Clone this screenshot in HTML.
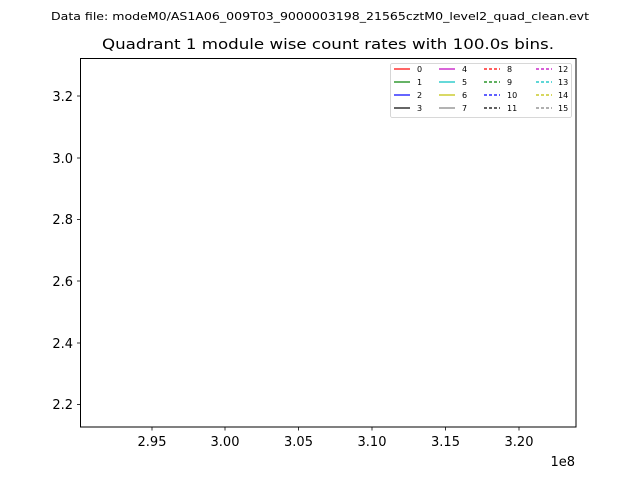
<!DOCTYPE html>
<html><head><style>body{margin:0;background:#fff}svg{display:block}</style></head><body>
<svg width="640" height="480" xmlns="http://www.w3.org/2000/svg" font-family="DejaVu Sans, Liberation Sans, sans-serif">
<rect width="640" height="480" fill="#fff"/>
<text x="320" y="20" font-size="11" text-anchor="middle" textLength="538" lengthAdjust="spacingAndGlyphs">Data file: modeM0/AS1A06_009T03_9000003198_21565cztM0_level2_quad_clean.evt</text>
<text x="328" y="49" font-size="14.4" text-anchor="middle" textLength="452" lengthAdjust="spacingAndGlyphs">Quadrant 1 module wise count rates with 100.0s bins.</text>
<rect x="80.5" y="58.5" width="495.5" height="368.5" fill="none" stroke="#000" stroke-width="1"/>
<g stroke="#000" stroke-width="0.8">
<line x1="77" y1="96" x2="80.5" y2="96"/><line x1="77" y1="158" x2="80.5" y2="158"/><line x1="77" y1="219.5" x2="80.5" y2="219.5"/><line x1="77" y1="281" x2="80.5" y2="281"/><line x1="77" y1="343" x2="80.5" y2="343"/><line x1="77" y1="404.5" x2="80.5" y2="404.5"/>
<line x1="152" y1="427" x2="152" y2="430.5"/><line x1="225" y1="427" x2="225" y2="430.5"/><line x1="298.5" y1="427" x2="298.5" y2="430.5"/><line x1="372" y1="427" x2="372" y2="430.5"/><line x1="445.5" y1="427" x2="445.5" y2="430.5"/><line x1="519" y1="427" x2="519" y2="430.5"/>
</g>
<g font-size="13" text-anchor="end">
<text x="73" y="101">3.2</text><text x="73" y="163">3.0</text><text x="73" y="224">2.8</text><text x="73" y="286">2.6</text><text x="73" y="348">2.4</text><text x="73" y="409">2.2</text>
</g>
<g font-size="13" text-anchor="middle">
<text x="152" y="446">2.95</text><text x="225" y="446">3.00</text><text x="298.5" y="446">3.05</text><text x="372" y="446">3.10</text><text x="445.5" y="446">3.15</text><text x="519" y="446">3.20</text>
</g>
<text x="575" y="466" font-size="13" text-anchor="end">1e8</text>
<rect x="390.5" y="63.5" width="181" height="54" rx="2" fill="#fff" stroke="#ccc" stroke-width="0.8"/>
<g stroke-width="1.2">
<line x1="394" y1="69" x2="410" y2="69" stroke="red"/>
<line x1="394" y1="82" x2="410" y2="82" stroke="green"/>
<line x1="394" y1="95" x2="410" y2="95" stroke="blue"/>
<line x1="394" y1="108" x2="410" y2="108" stroke="black"/>
<line x1="439" y1="69" x2="455" y2="69" stroke="#bf00bf"/>
<line x1="439" y1="82" x2="455" y2="82" stroke="#00bfbf"/>
<line x1="439" y1="95" x2="455" y2="95" stroke="#bfbf00"/>
<line x1="439" y1="108" x2="455" y2="108" stroke="gray"/>
<g stroke-dasharray="3,2">
<line x1="484" y1="69" x2="500" y2="69" stroke="red"/>
<line x1="484" y1="82" x2="500" y2="82" stroke="green"/>
<line x1="484" y1="95" x2="500" y2="95" stroke="blue"/>
<line x1="484" y1="108" x2="500" y2="108" stroke="black"/>
<line x1="536" y1="69" x2="552" y2="69" stroke="#bf00bf"/>
<line x1="536" y1="82" x2="552" y2="82" stroke="#00bfbf"/>
<line x1="536" y1="95" x2="552" y2="95" stroke="#bfbf00"/>
<line x1="536" y1="108" x2="552" y2="108" stroke="gray"/>
</g></g>
<g font-size="8">
<text x="417" y="72">0</text><text x="417" y="85">1</text><text x="417" y="98">2</text><text x="417" y="111">3</text>
<text x="462" y="72">4</text><text x="462" y="85">5</text><text x="462" y="98">6</text><text x="462" y="111">7</text>
<text x="507" y="72">8</text><text x="507" y="85">9</text><text x="507" y="98">10</text><text x="507" y="111">11</text>
<text x="558" y="72">12</text><text x="558" y="85">13</text><text x="558" y="98">14</text><text x="558" y="111">15</text>
</g>
</svg>
</body></html>
